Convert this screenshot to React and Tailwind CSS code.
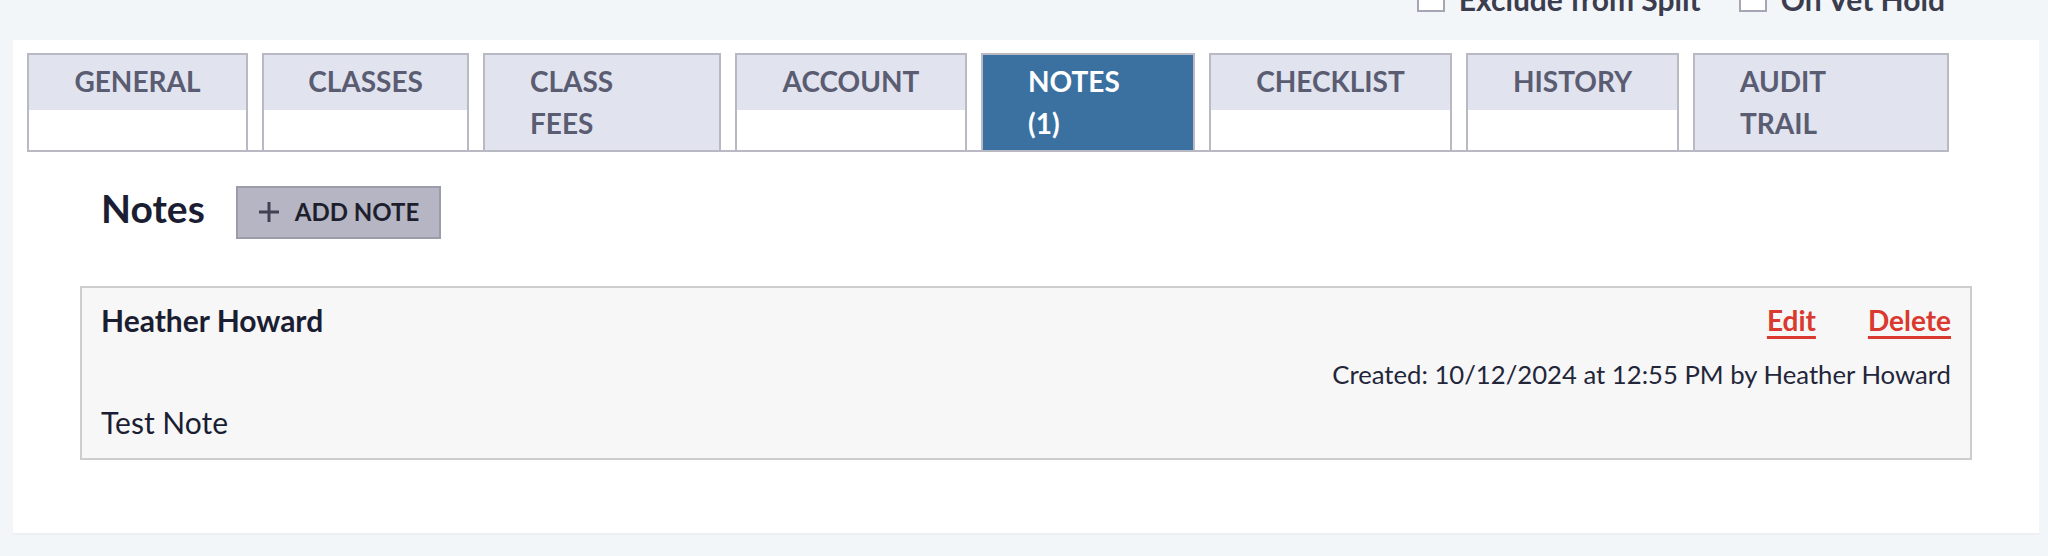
import React from 'react';

const tabs = [
    { lines: ['GENERAL'], width: 'w-[221px]' },
    { lines: ['CLASSES'], width: 'w-[207px]' },
    { lines: ['CLASS', 'FEES'], width: 'w-[238px]' },
    { lines: ['ACCOUNT'], width: 'w-[232px]' },
    { lines: ['NOTES', '(1)'], width: 'w-[214px]', active: true },
    { lines: ['CHECKLIST'], width: 'w-[243px]' },
    { lines: ['HISTORY'], width: 'w-[213px]' },
    { lines: ['AUDIT', 'TRAIL'], width: 'w-[256px]' },
];

const Tab = ({ tab }) => {
    const multi = tab.lines.length > 1;
    return (
        <div className={`${tab.width} flex flex-col border-2 border-b-0 border-[#b8b9c2] bg-white`}>
            <div
                className={`flex px-[45px] pt-[5px] text-[28px] leading-[42px] font-bold ${
                    multi ? 'justify-start flex-1 pb-[6px]' : 'justify-center pb-[8px]'
                } ${tab.active ? 'bg-[#3b71a0] text-white flex-1' : 'bg-[#e1e3ef] text-[#5a5c71]'}`}
            >
                <span>
                    {tab.lines.map((line, i) => (
                        <div key={i}>{line}</div>
                    ))}
                </span>
            </div>
        </div>
    );
};

const Checkbox = ({ label }) => (
    <label className="flex items-end gap-[14px] -mt-[18px] h-[30px]">
        <span className="w-[28px] h-[28px] shrink-0 border-2 border-[#a4a6b6] bg-white" />
        <span className="text-[30px] leading-[26px] font-bold text-[#3b3d4f] whitespace-nowrap">{label}</span>
    </label>
);

export default function App() {
    return (
        <div className="min-h-[556px] bg-[#f3f6f9] font-[Lato,sans-serif]">
            {/* Top options, mostly scrolled out of view */}
            <div className="h-[40px] flex justify-end gap-[38px] pr-[103px]">
                <Checkbox label="Exclude from Split" />
                <Checkbox label="On Vet Hold" />
            </div>

            <div className="ml-[13px] mr-[9px] bg-white border-b-2 border-[#eceff3] px-[14px] pt-[13px] pb-[73px]">
                {/* Tabs */}
                <div className="inline-flex items-stretch gap-[14px] border-b-2 border-[#b8b9c2]">
                    {tabs.map((tab, i) => (
                        <Tab key={i} tab={tab} />
                    ))}
                </div>

                <div className="px-[53px]">
                    {/* Notes header */}
                    <div className="flex items-center gap-[31px] pl-[21px] mt-[32px]">
                        <h2 className="text-[39px] leading-[48px] font-bold text-[#1b1e33] mb-[8px]">Notes</h2>
                        <button className="flex items-center gap-[15px] h-[53px] px-[20px] bg-[#b5b5c3] border-2 border-[#9b9ba9]">
                            <svg width="22" height="22" viewBox="0 0 22 22" className="text-[#404153]">
                                <path d="M11 1v20M1 11h20" stroke="currentColor" strokeWidth="3" />
                            </svg>
                            <span className="text-[24px] font-bold text-[#1e1f2e]">ADD NOTE</span>
                        </button>
                    </div>

                    {/* Note card */}
                    <div className="mt-[46px] bg-[#f7f7f7] border-2 border-[#cdcdcd] px-[19px] pt-[11px] pb-[15px] text-[#1b1e33]">
                        <div className="flex items-center justify-between">
                            <span className="text-[30px] leading-[42px] font-bold">Heather Howard</span>
                            <div className="flex gap-[52px] text-[28px] leading-[42px] font-bold text-[#d9392e]">
                                <a href="#" className="underline decoration-[3px] underline-offset-[5px]">Edit</a>
                                <a href="#" className="underline decoration-[3px] underline-offset-[5px]">Delete</a>
                            </div>
                        </div>
                        <div className="mt-[14px] text-right text-[25.7px] leading-[39px] text-[#23263a]">
                            Created: 10/12/2024 at 12:55 PM by Heather Howard
                        </div>
                        <div className="mt-[7px] text-[30px] leading-[42px]">Test Note</div>
                    </div>
                </div>
            </div>
        </div>
    );
}
